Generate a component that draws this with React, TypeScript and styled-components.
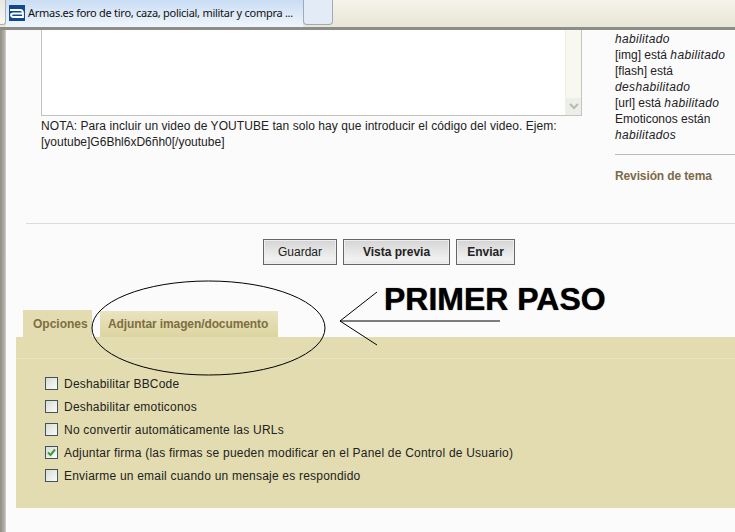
import React from "react";
import styled, { createGlobalStyle } from "styled-components";

const GlobalStyle = createGlobalStyle`
  html, body {
    margin: 0;
    padding: 0;
    background: #fbfbfb;
  }
  body {
    font-family: "Liberation Sans", Arial, sans-serif;
    font-size: 12px;
    color: #222;
  }
  em {
    letter-spacing: 0.35px;
  }
`;

const options = [
  { label: "Deshabilitar BBCode", checked: false },
  { label: "Deshabilitar emoticonos", checked: false },
  { label: "No convertir automáticamente las URLs", checked: false },
  {
    label: "Adjuntar firma (las firmas se pueden modificar en el Panel de Control de Usuario)",
    checked: true,
  },
  { label: "Enviarme un email cuando un mensaje es respondido", checked: false },
];

const App = () => {
  return (
    <Page>
      <GlobalStyle />
      <TabBar>
        <ClosedTabEnd />
        <ActiveBrowserTab>
          <Favicon viewBox="0 0 16 16">
            <rect width="16" height="16" fill="#0f4a8c" />
            <path
              d="M1 5H11Q14 5 14 8V12H4.5Q2 12 2 10Q2 8.5 4.5 8.5H13.5"
              fill="none"
              stroke="#fff"
              strokeWidth="1.8"
            />
          </Favicon>
          <BrowserTabTitle>Armas.es foro de tiro, caza, policial, militar y compra ...</BrowserTabTitle>
        </ActiveBrowserTab>
        <NewTab />
      </TabBar>

      <Body>
        <WindowEdge />
        <Main>
          <Columns>
            <EditorColumn>
              <TextArea>
                <ScrollTrack>
                  <ScrollButton>
                    <svg width="10" height="7" viewBox="0 0 10 7">
                      <path d="M1 1l4 4 4-4" fill="none" stroke="#b4bcb4" strokeWidth="2" />
                    </svg>
                  </ScrollButton>
                </ScrollTrack>
              </TextArea>
              <Note>
                NOTA: Para incluir un video de YOUTUBE tan solo hay que introducir el código del video. Ejem:
              </Note>
              <NoteCode>[youtube]G6Bhl6xD6ñh0[/youtube]</NoteCode>
            </EditorColumn>
            <SideColumn>
              <SideText>
                <em>habilitado</em>
                <br />
                [img] está <em>habilitado</em>
                <br />
                [flash] está
                <br />
                <em>deshabilitado</em>
                <br />
                [url] está <em>habilitado</em>
                <br />
                Emoticonos están
                <br />
                <em>habilitados</em>
              </SideText>
              <SideHeading>Revisión de tema</SideHeading>
            </SideColumn>
          </Columns>

          <Buttons>
            <Button>Guardar</Button>
            <Button $primary $width={107}>Vista previa</Button>
            <Button $primary $width={59}>Enviar</Button>
          </Buttons>

          <Tabs>
            <Tab $active>Opciones</Tab>
            <Tab>Adjuntar imagen/documento</Tab>
          </Tabs>
          <Panel>
            <PanelRule />
            {options.map((option) => (
              <OptionRow key={option.label}>
                <CheckBox>
                  {option.checked && (
                    <svg width="9" height="9" viewBox="0 0 9 9">
                      <path d="M1 4.5l2.5 2.5L8 1.5" fill="none" stroke="#3d9a3d" strokeWidth="2" />
                    </svg>
                  )}
                </CheckBox>
                {option.label}
              </OptionRow>
            ))}
          </Panel>
        </Main>
      </Body>

      <Annotation width="735" height="532" viewBox="0 0 735 532">
        <ellipse cx="208.5" cy="328" rx="116.5" ry="47" fill="none" stroke="#000" />
        <path d="M500 321H340" fill="none" stroke="#000" strokeWidth="1.2" />
        <path d="M377 292L340 321L377 345" fill="none" stroke="#000" />
      </Annotation>
      <Callout>PRIMER PASO</Callout>
    </Page>
  );
};
export default App;

const Page = styled.div`
  position: relative;
  width: 735px;
  height: 532px;
  overflow: hidden;
`;

const TabBar = styled.div`
  display: flex;
  align-items: flex-start;
  height: 27px;
  background: linear-gradient(#f5f3ea, #e9e6d6);
  border-bottom: 3px solid #8c8c88;
`;

const ClosedTabEnd = styled.div`
  box-sizing: border-box;
  flex: none;
  width: 6px;
  height: 25px;
  background: linear-gradient(#e8e8e0, #f8f8f4);
  border-right: 1px solid #a9b0b8;
  border-bottom: 1px solid #a9b0b8;
  border-radius: 0 0 3px 0;
`;

const ActiveBrowserTab = styled.div`
  display: flex;
  align-items: center;
  gap: 3px;
  box-sizing: border-box;
  width: 297px;
  height: 27px;
  padding: 0 0 2px 3px;
  background: linear-gradient(#c9ddf5, #f0f5fb);
`;

const Favicon = styled.svg`
  width: 16px;
  height: 16px;
  flex: none;
`;

const BrowserTabTitle = styled.span`
  font-family: "Noto Sans", sans-serif;
  font-size: 11px;
  letter-spacing: -0.27px;
  color: #111;
  white-space: nowrap;
`;

const NewTab = styled.div`
  box-sizing: border-box;
  width: 30px;
  height: 25px;
  background: #e3ebf6;
  border: 1px solid #a3aab3;
  border-top: 0;
  border-radius: 0 0 4px 4px;
`;

const Body = styled.div`
  display: flex;
  height: 502px;
`;

const WindowEdge = styled.div`
  flex: none;
  width: 6px;
  background: linear-gradient(90deg, #8f8c82, #b0aea4 70%, #d5d3cb);
`;

const Main = styled.div`
  flex: 1;
  min-width: 0;
  display: flex;
  flex-direction: column;
`;

const Columns = styled.div`
  display: flex;
  height: 193px;
  margin-left: 20px;
  border-bottom: 1px solid #dcdcdc;
`;

const EditorColumn = styled.div`
  width: 589px;
  padding-left: 15px;
  box-sizing: border-box;
`;

const TextArea = styled.div`
  display: flex;
  justify-content: flex-end;
  box-sizing: border-box;
  width: 541px;
  height: 86px;
  background: #fff;
  border: 1px solid #c4c4bc;
  border-top: 0;
`;

const ScrollTrack = styled.div`
  display: flex;
  align-items: flex-end;
  width: 15px;
  background: #f8f8f1;
  border-left: 1px solid #efefe9;
`;

const ScrollButton = styled.div`
  display: flex;
  align-items: center;
  justify-content: center;
  width: 15px;
  height: 17px;
  background: #eceee8;
`;

const Note = styled.div`
  margin-top: 2px;
  line-height: 16px;
  letter-spacing: 0.063px;
`;

const NoteCode = styled.div`
  line-height: 16px;
`;

const SideColumn = styled.div`
  flex: 1;
  min-width: 0;
`;

const SideText = styled.div`
  line-height: 16px;
  padding-bottom: 11px;
  border-bottom: 1px solid #bdbcb4;
  margin-top: 1px;
`;

const SideHeading = styled.div`
  margin-top: 14px;
  font-weight: bold;
  letter-spacing: -0.12px;
  color: #7c6a48;
`;

const Buttons = styled.div`
  display: flex;
  gap: 6px;
  margin: 15px 0 0 257px;
`;

const Button = styled.div<{ $primary?: boolean; $width?: number }>`
  display: flex;
  align-items: center;
  justify-content: center;
  box-sizing: border-box;
  width: ${(props) => props.$width || 74}px;
  height: 26px;
  border: 1px solid #666;
  outline: 1px solid #eee;
  outline-offset: -2px;
  background: linear-gradient(#d4d4d4, #f2f2f2 80%, #e4e4e4);
  color: #222;
  font-weight: ${(props) => (props.$primary ? "bold" : "normal")};
`;

const Tabs = styled.div`
  display: flex;
  align-items: flex-end;
  gap: 8px;
  height: 27px;
  margin: 45px 0 0 17px;
`;

const Tab = styled.div<{ $active?: boolean }>`
  display: flex;
  align-items: center;
  box-sizing: border-box;
  padding: 0 0 ${(props) => (props.$active ? 0 : 1)}px ${(props) => (props.$active ? 10 : 8)}px;
  height: ${(props) => (props.$active ? 27 : 26)}px;
  width: ${(props) => (props.$active ? 69 : 178)}px;
  background: ${(props) =>
    props.$active ? "#e2dcb0" : "linear-gradient(#e9e3c0, #dcd5a0)"};
  color: #7d6e42;
  font-weight: bold;
  letter-spacing: ${(props) => (props.$active ? "0" : "-0.1px")};
  white-space: nowrap;
`;

const Panel = styled.div`
  display: flex;
  flex-direction: column;
  box-sizing: border-box;
  height: 171px;
  margin-left: 10px;
  padding: 21px 0 0 29px;
  background: #e2dcb0;
`;

const PanelRule = styled.div`
  height: 1px;
  margin: 0 0 13px -29px;
  background: #e9e4c4;
`;

const OptionRow = styled.div`
  display: flex;
  align-items: center;
  gap: 6px;
  height: 23px;
  color: #222;
  letter-spacing: 0.21px;
`;

const CheckBox = styled.div`
  display: flex;
  align-items: center;
  justify-content: center;
  box-sizing: border-box;
  width: 13px;
  height: 13px;
  border: 1px solid #3e5560;
  background: linear-gradient(135deg, #d8dcd4, #fbfbf8);
`;

const Annotation = styled.svg`
  position: absolute;
  left: 0;
  top: 0;
  pointer-events: none;
`;

const Callout = styled.div`
  position: absolute;
  left: 384px;
  top: 282px;
  font-size: 32px;
  line-height: 34px;
  font-weight: bold;
  color: #000;
  text-shadow: 0 0 1px #333;
  white-space: nowrap;
`;
